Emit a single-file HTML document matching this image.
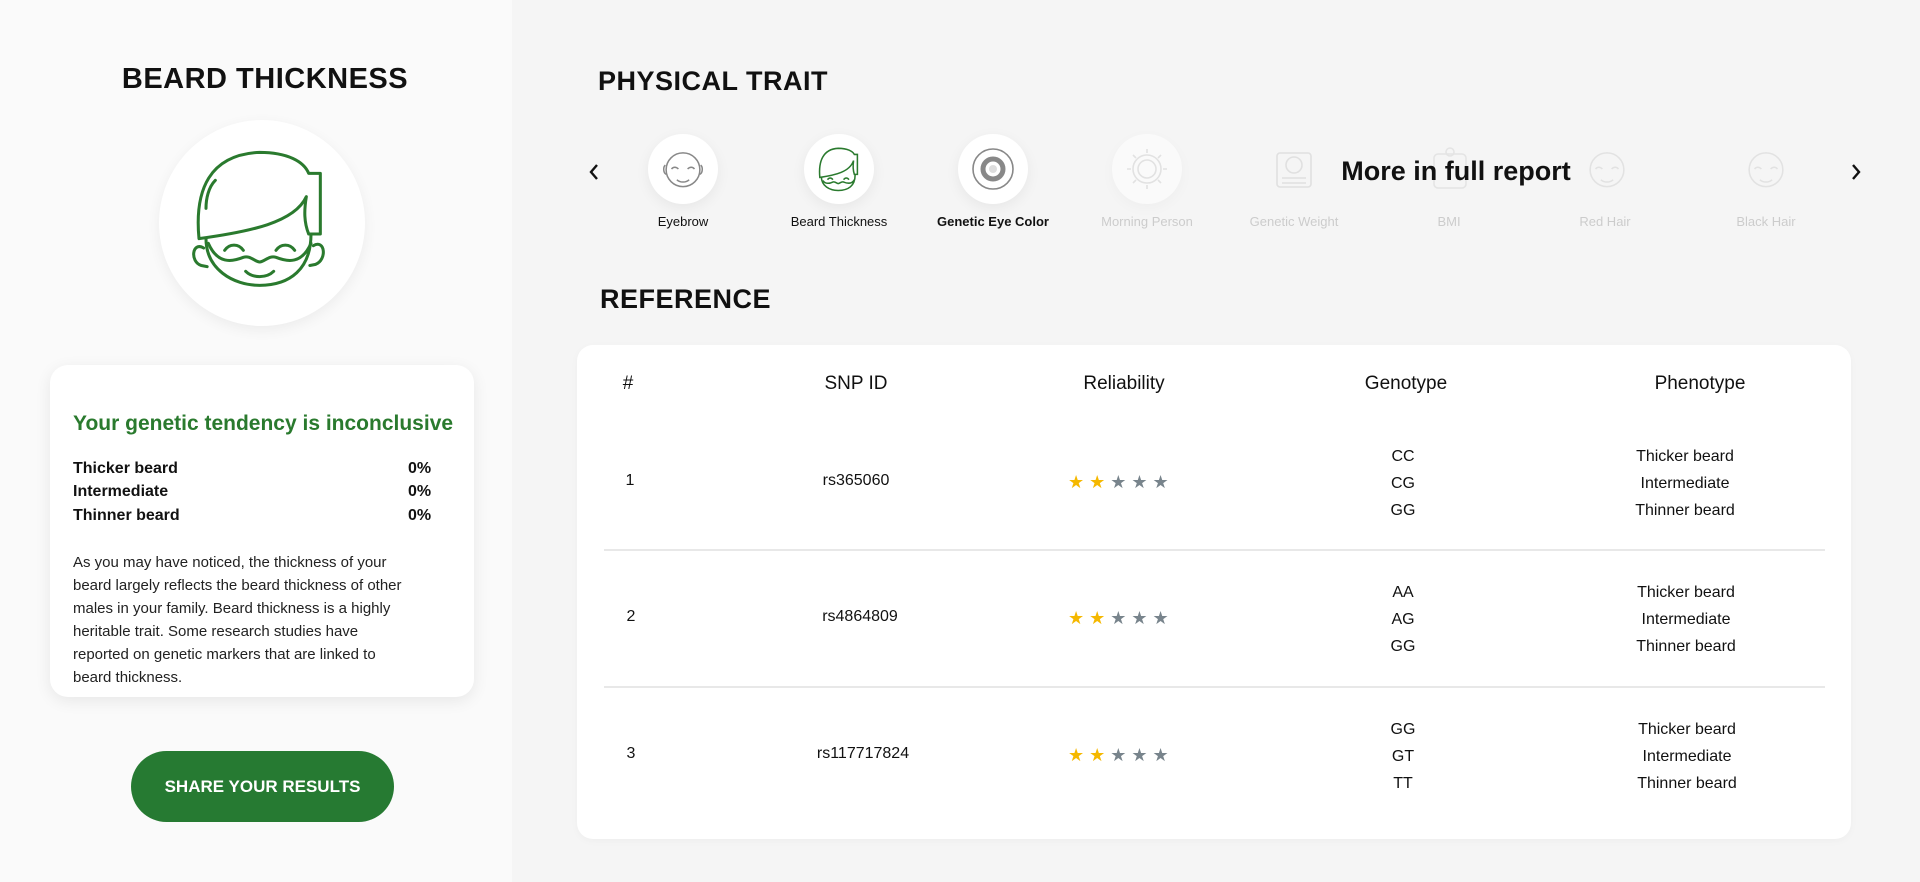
<!DOCTYPE html>
<html><head><meta charset="utf-8"><style>
*{margin:0;padding:0;box-sizing:border-box}
body{width:1920px;height:882px;background:#f5f5f5;font-family:"Liberation Sans",sans-serif;color:#111;position:relative;overflow:hidden}
.abs{position:absolute}
.left{left:0;top:0;width:512px;height:882px;background:#fafafa}
h1{position:absolute;font-size:29px;font-weight:700;letter-spacing:0.5px}
.circle{position:absolute;border-radius:50%;background:#fff;box-shadow:0 4px 14px rgba(0,0,0,0.06)}
.card{position:absolute;background:#fff;border-radius:18px;box-shadow:0 4px 16px rgba(0,0,0,0.08)}
.row{position:absolute;left:73px;width:360px;font-size:16px;font-weight:700}
.row span{position:absolute;left:335px}
.lbl{position:absolute;font-size:13px;width:150px;text-align:center;transform:translateX(-75px)}
.c{position:absolute;text-align:center;width:200px;transform:translateX(-100px);font-size:16px}
.th{font-size:19px}
.sep{position:absolute;left:604px;width:1221px;height:2px;background:#e8e8e8}
</style></head><body>
<div class="abs left"></div>
<h1 style="left:0;width:530px;text-align:center;top:63px">BEARD THICKNESS</h1>
<div class="circle" style="left:159px;top:120px;width:206px;height:206px"></div>
<svg class="abs" style="left:192px;top:150px" width="140" height="140" viewBox="0 0 120 120" fill="none" stroke="#2a7a2e" stroke-width="2.6" stroke-linecap="round" stroke-linejoin="round">
<path d="M6,76 C2,34 15,4 58,2 C82,2 96,10 100,20 L110,20 L110,72 L100,72 C96,62 96,52 98,40 C88,62 50,70 6,76 Z"/>
<path d="M20,26 C14,32 12,42 12,50"/>
<path d="M12,76 C12,102 35,116 58,116 C84,116 102,102 102,72"/>
<path d="M10,84 C0,78 -2,96 8,99 L13,100"/>
<path d="M104,82 C114,76 116,94 106,98 L101,99"/>
<path d="M28,86 C32,80 40,80 44,86 M72,86 C76,80 84,80 88,86"/>
<path d="M14,80 C22,98 34,96 44,92 C50,90 54,96 58,96 C62,96 66,90 72,92 C82,96 94,98 102,80"/>
<path d="M46,104 C52,110 64,110 70,104"/>
</svg>
<div class="card" style="left:50px;top:365px;width:424px;height:332px"></div>
<div class="abs" style="left:73px;top:412px;font-size:21px;font-weight:700;color:#2a7a2e">Your genetic tendency is inconclusive</div>
<div class="row" style="top:460px">Thicker beard<span>0%</span></div>
<div class="row" style="top:483px">Intermediate<span>0%</span></div>
<div class="row" style="top:507px">Thinner beard<span>0%</span></div>
<div class="abs" style="left:73px;top:551px;width:340px;font-size:15px;line-height:23px;color:#222">As you may have noticed, the thickness of your beard largely reflects the beard thickness of other males in your family. Beard thickness is a highly heritable trait. Some research studies have reported on genetic markers that are linked to beard thickness.</div>
<div class="abs" style="left:131px;top:751px;width:263px;height:71px;border-radius:36px;background:#267a32;color:#fff;font-size:17px;font-weight:700;text-align:center;line-height:71px">SHARE YOUR RESULTS</div>

<h1 style="left:598px;top:66px;font-size:27px">PHYSICAL TRAIT</h1>
<svg class="abs" style="left:586px;top:162px" width="16" height="20" viewBox="0 0 16 20"><path d="M11,3 L5,10 L11,17" stroke="#111" stroke-width="2.4" fill="none"/></svg>
<svg class="abs" style="left:1848px;top:162px" width="16" height="20" viewBox="0 0 16 20"><path d="M5,3 L11,10 L5,17" stroke="#111" stroke-width="2.4" fill="none"/></svg>

<div class="circle" style="left:648px;top:134px;width:70px;height:70px"></div>
<svg class="abs" style="left:660px;top:146px" width="46" height="46" viewBox="0 0 120 120" fill="none" stroke="#888" stroke-width="4"><circle cx="60" cy="62" r="44"/><path d="M30,60 C35,54 42,54 48,60 M72,60 C78,54 85,54 90,60 M44,88 C52,96 68,96 76,88 M14,50 C8,54 8,70 16,74 M106,50 C112,54 112,70 104,74"/></svg>
<div class="circle" style="left:804px;top:134px;width:70px;height:70px"></div>
<svg class="abs" style="left:816px;top:146px" width="46" height="46" viewBox="0 0 120 120" fill="none" stroke="#2a7a2e" stroke-width="4"><path d="M10,82 C6,40 18,8 58,6 C82,6 96,14 100,22 L108,22 L108,74 L100,74 C96,62 96,52 98,38 C88,68 50,76 10,82 Z M14,80 C14,104 35,116 58,116 C84,116 102,104 102,76 M30,88 C34,82 40,82 44,88 M72,88 C76,82 82,82 86,88 M18,90 C24,100 36,98 44,94 C50,92 54,98 58,98 C62,98 66,92 72,94 C82,98 94,100 100,88"/></svg>
<div class="circle" style="left:958px;top:134px;width:70px;height:70px"></div>
<svg class="abs" style="left:970px;top:146px" width="46" height="46" viewBox="0 0 46 46" fill="none" stroke="#888"><circle cx="23" cy="23" r="20" stroke-width="1.6"/><circle cx="23" cy="23" r="10" stroke-width="5"/><circle cx="23" cy="23" r="4" fill="#ddd" stroke="none"/></svg>
<div class="circle" style="left:1112px;top:134px;width:70px;height:70px;opacity:.5"></div>
<svg class="abs" style="left:1125px;top:147px" width="44" height="44" viewBox="0 0 44 44" fill="none" stroke="#e2e2e2" stroke-width="1.6"><circle cx="22" cy="22" r="14"/><circle cx="22" cy="22" r="9"/><path d="M22,2v4M22,38v4M2,22h4M38,22h4M8,8l3,3M33,33l3,3M8,36l3-3M33,11l3-3"/></svg>
<svg class="abs" style="left:1274px;top:150px" width="40" height="40" viewBox="0 0 40 40" fill="none" stroke="#e0e0e0" stroke-width="1.6"><rect x="3" y="3" width="34" height="34" rx="3"/><circle cx="20" cy="15" r="8"/><path d="M8,28h24M8,33h24"/></svg>
<svg class="abs" style="left:1430px;top:146px" width="40" height="46" viewBox="0 0 40 46" fill="none" stroke="#e4e4e4" stroke-width="1.6"><rect x="4" y="8" width="32" height="34" rx="4"/><circle cx="20" cy="6" r="4"/></svg>
<svg class="abs" style="left:1584px;top:146px" width="46" height="46" viewBox="0 0 120 120" fill="none" stroke="#e2e2e2" stroke-width="4"><circle cx="60" cy="62" r="44"/><path d="M30,60 C35,54 42,54 48,60 M72,60 C78,54 85,54 90,60 M44,88 C52,96 68,96 76,88"/></svg>
<svg class="abs" style="left:1743px;top:146px" width="46" height="46" viewBox="0 0 120 120" fill="none" stroke="#e2e2e2" stroke-width="4"><circle cx="60" cy="62" r="44"/><path d="M30,60 C35,54 42,54 48,60 M72,60 C78,54 85,54 90,60 M44,88 C52,96 68,96 76,88"/></svg>
<div class="abs" style="left:1456px;top:156px;transform:translateX(-50%);font-size:27px;font-weight:700;white-space:nowrap">More in full report</div>

<div class="lbl" style="left:683px;top:214px">Eyebrow</div>
<div class="lbl" style="left:839px;top:214px">Beard Thickness</div>
<div class="lbl" style="left:993px;top:214px;font-weight:700">Genetic Eye Color</div>
<div class="lbl" style="left:1147px;top:214px;color:#ccc">Morning Person</div>
<div class="lbl" style="left:1294px;top:214px;color:#ccc">Genetic Weight</div>
<div class="lbl" style="left:1449px;top:214px;color:#ccc">BMI</div>
<div class="lbl" style="left:1605px;top:214px;color:#ccc">Red Hair</div>
<div class="lbl" style="left:1766px;top:214px;color:#ccc">Black Hair</div>

<h1 style="left:600px;top:284px;font-size:27px">REFERENCE</h1>
<div class="card" style="left:577px;top:345px;width:1274px;height:494px;border-radius:16px;box-shadow:0 2px 8px rgba(0,0,0,0.03)"></div>
<div class="c th" style="left:628px;top:373px">#</div>
<div class="c th" style="left:856px;top:373px">SNP ID</div>
<div class="c th" style="left:1124px;top:373px">Reliability</div>
<div class="c th" style="left:1406px;top:373px">Genotype</div>
<div class="c th" style="left:1700px;top:373px">Phenotype</div>
<div class="sep" style="top:549px"></div>
<div class="sep" style="top:686px"></div>

<div class="c" style="left:630px;top:472px">1</div>
<div class="c" style="left:856px;top:472px">rs365060</div>
<div class="c" style="left:1403px;top:443px;line-height:27px">CC<br>CG<br>GG</div>
<div class="c" style="left:1685px;top:443px;line-height:27px">Thicker beard<br>Intermediate<br>Thinner beard</div>

<div class="c" style="left:631px;top:608px">2</div>
<div class="c" style="left:860px;top:608px">rs4864809</div>
<div class="c" style="left:1403px;top:579px;line-height:27px">AA<br>AG<br>GG</div>
<div class="c" style="left:1686px;top:579px;line-height:27px">Thicker beard<br>Intermediate<br>Thinner beard</div>

<div class="c" style="left:631px;top:745px">3</div>
<div class="c" style="left:863px;top:745px">rs117717824</div>
<div class="c" style="left:1403px;top:716px;line-height:27px">GG<br>GT<br>TT</div>
<div class="c" style="left:1687px;top:716px;line-height:27px">Thicker beard<br>Intermediate<br>Thinner beard</div>

<div class="abs" style="left:1068px;top:472px;font-size:18px;letter-spacing:5px;white-space:nowrap"><span style="color:#f5b800">★★</span><span style="color:#78848c">★★★</span></div>
<div class="abs" style="left:1068px;top:608px;font-size:18px;letter-spacing:5px;white-space:nowrap"><span style="color:#f5b800">★★</span><span style="color:#78848c">★★★</span></div>
<div class="abs" style="left:1068px;top:745px;font-size:18px;letter-spacing:5px;white-space:nowrap"><span style="color:#f5b800">★★</span><span style="color:#78848c">★★★</span></div>
</body></html>
